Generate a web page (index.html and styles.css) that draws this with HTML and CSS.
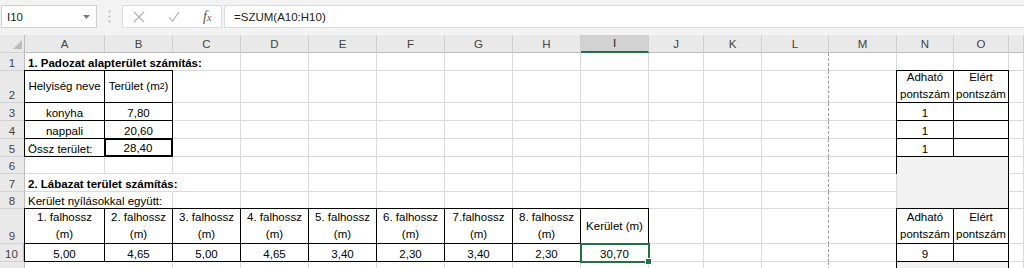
FILE: index.html
```html
<!DOCTYPE html>
<html>
<head>
	<meta charset="UTF-8">
	<title>Padozat és lábazat számítás</title>
	<link rel="stylesheet" href="styles.css">
</head>
<body>
	<div class="topbar">
		<div class="namebox">
			<span>I10</span>
			<svg width="7" height="4" viewBox="0 0 7 4"><path d="M0 0 L7 0 L3.5 4 Z" fill="#7a7a7a"/></svg>
		</div>
		<div class="dots">
			<svg width="3" height="13" viewBox="0 0 3 13"><circle cx="1.5" cy="1.5" r="1" fill="#b5b5b5"/><circle cx="1.5" cy="6.5" r="1" fill="#b5b5b5"/><circle cx="1.5" cy="11.5" r="1" fill="#b5b5b5"/></svg>
		</div>
		<div class="fxbox">
			<svg width="12" height="12" viewBox="0 0 12 12"><path d="M1 1 L11 11 M11 1 L1 11" stroke="#b0b0b0" stroke-width="1.1" fill="none"/></svg>
			<svg width="12" height="11" viewBox="0 0 12 11"><path d="M1 6 L4.5 10 L11 1" stroke="#b0b0b0" stroke-width="1.1" fill="none"/></svg>
			<span class="fx">f<small>x</small></span>
		</div>
		<div class="formula">=SZUM(A10:H10)</div>
	</div>

	<div class="sheet">
		<div class="row hdr">
			<div class="corner"><svg width="9" height="9" viewBox="0 0 9 9"><path d="M0 9 L9 9 L9 0 Z" fill="#bcbcbc"/></svg></div>
			<div>A</div><div>B</div><div>C</div><div>D</div><div>E</div><div>F</div><div>G</div><div>H</div>
			<div class="hsel">I</div><div>J</div><div>K</div><div>L</div><div>M</div><div>N</div><div>O</div><div></div>
		</div>

		<!-- 1 -->
		<div class="row">
			<div>1</div>
			<div class="bold nr">1. Padozat alapterület számítás:</div>
			<div class="nr"></div>
			<!-- C..P -->
			<div></div><div></div><div></div><div></div>
			<div></div><div></div><div></div><div></div>
			<div></div><div></div><div></div><div></div>
			<div></div><div></div>
		</div>

		<!-- 2 -->
		<div class="row">
			<div>2</div>
			<div class="b c m">Helyiség neve</div>
			<div class="b c m">Terület (m<sup>2</sup>)</div>
			<!-- C..M -->
			<div></div><div></div><div></div><div></div>
			<div></div><div></div><div></div><div></div>
			<div></div><div></div><div></div>
			<div class="b c m w">Adható<br>pontszám</div>
			<div class="b c m w">Elért<br>pontszám</div>
			<div></div>
		</div>

		<!-- 3 -->
		<div class="row">
			<div>3</div>
			<div class="b c">konyha</div>
			<div class="b c">7,80</div>
			<div></div><div></div><div></div><div></div>
			<div></div><div></div><div></div><div></div>
			<div></div><div></div><div></div>
			<div class="b c">1</div>
			<div class="b"></div>
			<div></div>
		</div>

		<!-- 4 -->
		<div class="row">
			<div>4</div>
			<div class="b c">nappali</div>
			<div class="b c">20,60</div>
			<div></div><div></div><div></div><div></div>
			<div></div><div></div><div></div><div></div>
			<div></div><div></div><div></div>
			<div class="b c">1</div>
			<div class="b"></div>
			<div></div>
		</div>

		<!-- 5 -->
		<div class="row">
			<div>5</div>
			<div class="b">Össz terület:</div>
			<div class="thick c">28,40</div>
			<div></div><div></div><div></div><div></div>
			<div></div><div></div><div></div><div></div>
			<div></div><div></div><div></div>
			<div class="b c">1</div>
			<div class="b"></div>
			<div></div>
		</div>

		<!-- 6 -->
		<div class="row">
			<div>6</div>
			<!-- A..M -->
			<div></div><div></div><div></div><div></div>
			<div></div><div></div><div></div><div></div>
			<div></div><div></div><div></div><div></div>
			<div></div>
			<div class="b gray merged"></div>
			<div></div>
		</div>

		<!-- 7 -->
		<div class="row">
			<div>7</div>
			<div class="bold nr">2. Lábazat terület számítás:</div>
			<div class="nr"></div>
			<!-- C..M -->
			<div></div><div></div><div></div><div></div>
			<div></div><div></div><div></div><div></div>
			<div></div><div></div><div></div>
			<div></div>
		</div>

		<!-- 8 -->
		<div class="row">
			<div>8</div>
			<div class="nr">Kerület nyílásokkal együtt:</div>
			<!-- B..M -->
			<div></div><div></div><div></div><div></div>
			<div></div><div></div><div></div><div></div>
			<div></div><div></div><div></div><div></div>
			<div></div>
		</div>

		<!-- 9 -->
		<div class="row">
			<div>9</div>
			<div class="b c w low">1. falhossz<br>(m)</div>
			<div class="b c w low">2. falhossz<br>(m)</div>
			<div class="b c w low">3. falhossz<br>(m)</div>
			<div class="b c w low">4. falhossz<br>(m)</div>
			<div class="b c w low">5. falhossz<br>(m)</div>
			<div class="b c w low">6. falhossz<br>(m)</div>
			<div class="b c w low">7.falhossz<br>(m)</div>
			<div class="b c w low">8. falhossz<br>(m)</div>
			<div class="b c m">Kerület (m)</div>
			<div></div><div></div><div></div><div></div>
			<div class="b c m w">Adható<br>pontszám</div>
			<div class="b c m w">Elért<br>pontszám</div>
			<div></div>
		</div>

		<!-- 10 -->
		<div class="row">
			<div class="rsel">10</div>
			<div class="b c">5,00</div>
			<div class="b c">4,65</div>
			<div class="b c">5,00</div>
			<div class="b c">4,65</div>
			<div class="b c">3,40</div>
			<div class="b c">2,30</div>
			<div class="b c">3,40</div>
			<div class="b c">2,30</div>
			<div class="b c sel">30,70</div>
			<div></div><div></div><div></div><div></div>
			<div class="b c">9</div>
			<div class="b"></div>
			<div></div>
		</div>

		<!-- 11 -->
		<div class="row">
			<div>11</div>
			<div class="nr">Nyílászárók szélessége:</div>
			<!-- B..M -->
			<div></div><div></div><div></div><div></div>
			<div></div><div></div><div></div><div></div>
			<div></div><div></div><div></div><div></div>
			<div class="b gray wide"></div>
			<div></div>
		</div>
	</div>
</body>
</html>
```

FILE: styles.css
```css
* {
	margin: 0;
	padding: 0;
	box-sizing: border-box;
}

body {
	width: 1024px;
	height: 268px;
	overflow: hidden;
	background: #ffffff;
	font-family: "Liberation Sans", Arial, sans-serif;
	font-size: 11.5px;
	color: #000000;
}

/* formula bar */
.topbar {
	height: 35px;
	display: flex;
	align-items: flex-start;
	padding-top: 5px;
	padding-left: 1px;
	background-color: #f3f3f3;
}

.namebox {
	width: 96px;
	height: 23px;
	display: flex;
	align-items: center;
	justify-content: space-between;
	padding: 0 6px 0 5px;
	background-color: #ffffff;
	border: 1px solid #d0d0d0;
	color: #222;
}

.dots {
	width: 25px;
	height: 23px;
	display: flex;
	align-items: center;
	justify-content: center;
}

.fxbox {
	width: 100px;
	height: 23px;
	display: flex;
	align-items: center;
	gap: 23px;
	padding-left: 10px;
	background-color: #ffffff;
	border: 1px solid #dcdcdc;
}

.fx {
	font-family: "Liberation Serif", "Times New Roman", serif;
	font-style: italic;
	font-size: 14px;
	color: #555;
}

.fx small {
	font-size: 10px;
}

.formula {
	flex: 1;
	height: 23px;
	margin-left: 2px;
	display: flex;
	align-items: center;
	padding-left: 9px;
	background-color: #ffffff;
	border: 1px solid #dcdcdc;
	border-right: none;
	color: #222;
}

/* sheet grid */
.sheet {
	display: grid;
	grid-template-columns: 25px 80px repeat(8, 68px) 55px 58px 67px 68px 57px 55px 1fr;
	grid-template-rows: 18px 18px 32px 18px 18px 18px 17px 18px 17px 35px 18px 18px;
}

.row {
	display: contents;
}

.row > div {
	display: flex;
	align-items: flex-end;
	padding: 0 3px 1px;
	white-space: nowrap;
	border-right: 1px solid #dadada;
	border-bottom: 1px solid #dadada;
}

.row > div:first-child {
	justify-content: center;
	background-color: #e9e9e9;
	border-right-color: #bdbdbd;
	border-bottom-color: #d2d2d2;
	color: #444;
}

.row:not(.hdr) > div:nth-child(13) {
	border-right: 1px dashed #9c9c9c;
}

.hdr > div {
	justify-content: center;
	align-items: center;
	padding: 0;
	background-color: #e9e9e9;
	border-right-color: #d0d0d0;
	border-bottom-color: #bdbdbd;
	color: #444;
}

.hdr > div.corner {
	justify-content: flex-end;
	align-items: flex-end;
	padding: 0 2px 3px 0;
}

.hdr > .hsel {
	background-color: #d2d2d2;
	border-bottom: 2px solid #217346;
	color: #222;
}

.row > .rsel {
	background-color: #d2d2d2;
	border-right: 2px solid #217346;
}

/* cell formats */
.c {
	justify-content: center;
	text-align: center;
}

.m {
	align-items: center !important;
}

.w {
	white-space: normal !important;
	line-height: 17px;
}

.row > .low {
	padding-bottom: 0;
}

.bold {
	font-weight: bold;
}

.row > .nr {
	border-right-color: transparent;
}

.row > .b {
	border-right-color: #000;
	border-bottom-color: #000;
	box-shadow: -1px 0 0 #000, 0 -1px 0 #000, -1px -1px 0 #000;
}

.row > .thick {
	border-right: 2px solid #000;
	border-bottom: 2px solid #000;
	box-shadow: -1px 0 0 #000, 0 -1px 0 #000, -1px -1px 0 #000, inset 1px 1px 0 #000;
}

sup {
	font-size: 8.5px;
	line-height: 0;
	vertical-align: 5px;
}

.gray {
	background-color: #f2f2f2;
}

.merged {
	grid-column: span 2;
	grid-row: span 3;
}

.wide {
	grid-column: span 2;
}

/* active cell */
.sel {
	position: relative;
	z-index: 1;
	outline: 2px solid #217346;
	outline-offset: -1px;
}

.sel:after {
	content: "";
	position: absolute;
	right: -4px;
	bottom: -4px;
	width: 5px;
	height: 5px;
	background-color: #217346;
	border: 1px solid #ffffff;
}
```
